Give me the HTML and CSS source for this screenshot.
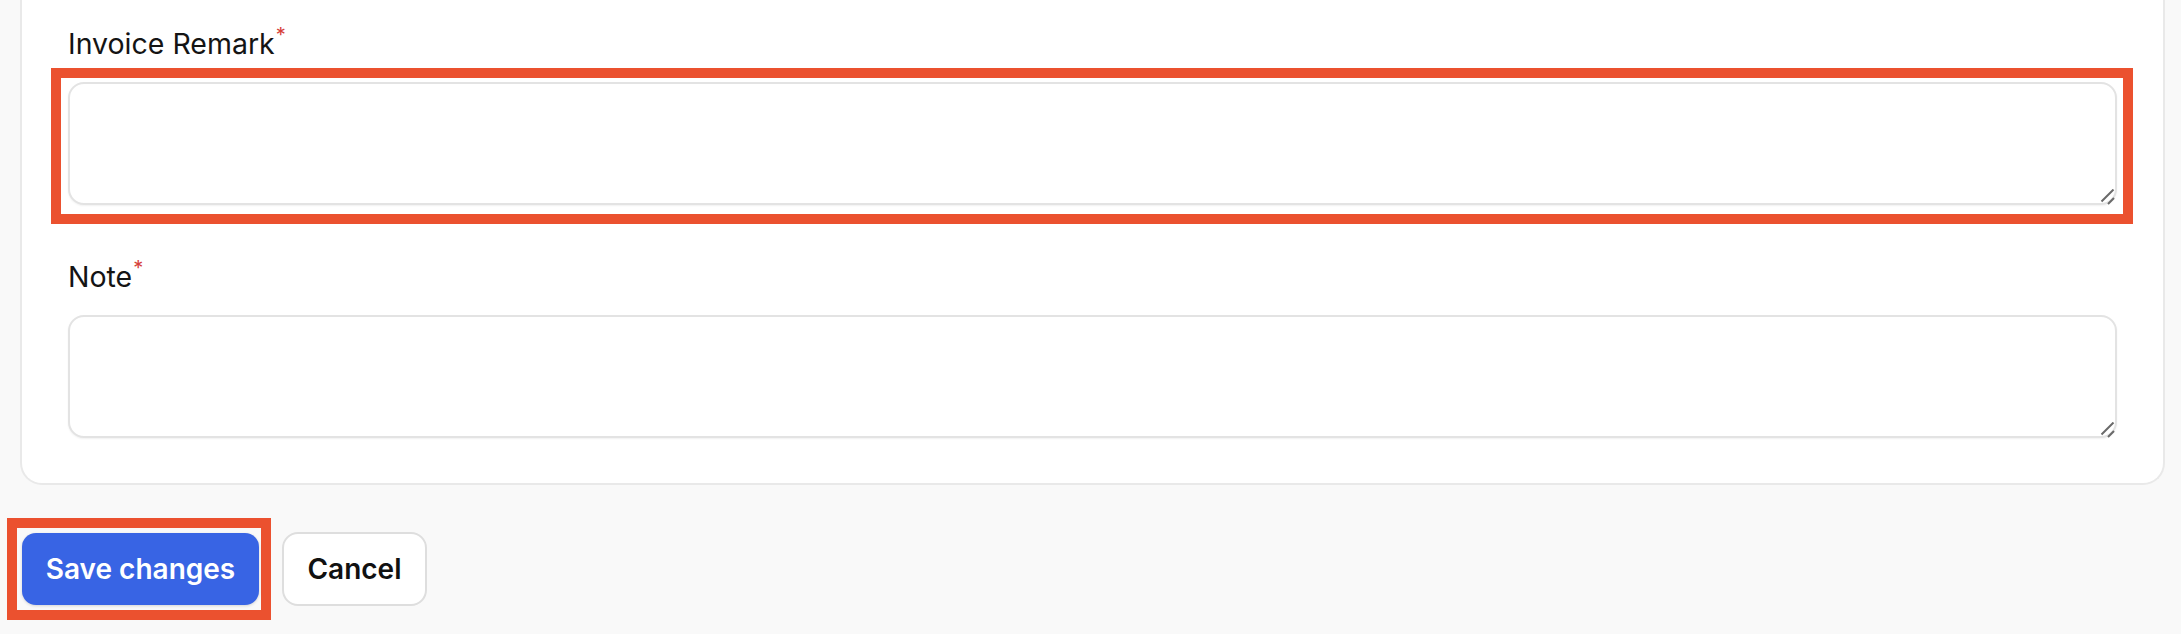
FILE: index.html
```html
<!DOCTYPE html>
<html lang="en">
<head>
<meta charset="utf-8">
<title>Invoice form</title>
<link rel="stylesheet" href="styles.css">
</head>
<body>
<div class="page">
  <section class="card">
    <div class="field">
      <label class="label" for="remark">Invoice Remark<span class="req">*</span></label>
      <div class="frame frame-hl">
        <textarea id="remark" class="input"></textarea>
        <svg class="grip" width="16" height="16" viewBox="0 0 16 16" aria-hidden="true">
          <path d="M1.5 12.5 L13.5 0.5 M8 15 L14 9" stroke="#6a6a6a" stroke-width="2" stroke-linecap="butt" fill="none"/>
        </svg>
      </div>
    </div>
    <div class="field">
      <label class="label" for="note">Note<span class="req">*</span></label>
      <div class="frame">
        <textarea id="note" class="input"></textarea>
        <svg class="grip" width="16" height="16" viewBox="0 0 16 16" aria-hidden="true">
          <path d="M1.5 12.5 L13.5 0.5 M8 15 L14 9" stroke="#6a6a6a" stroke-width="2" stroke-linecap="butt" fill="none"/>
        </svg>
      </div>
    </div>
  </section>
  <div class="actions">
    <div class="btn-hl">
      <button class="btn btn-primary" type="button">Save changes</button>
    </div>
    <button class="btn btn-secondary" type="button">Cancel</button>
  </div>
</div>
</body>
</html>
```
FILE: styles.css
```css
html, body {
  margin: 0;
  padding: 0;
  background: #f9f9f9;
  font-family: Inter, "Noto Sans", "Liberation Sans", sans-serif;
  color: #111111;
}

.page {
  display: flex;
  flex-direction: column;
  height: 634px;
  overflow: hidden;
}

.card {
  margin: 0 16px 0 20px;
  background: #ffffff;
  border: 2px solid #e9e9e9;
  border-top: 0;
  border-radius: 0 0 22px 22px;
  padding: 24px 46px 26px 46px;
  display: flex;
  flex-direction: column;
  gap: 33px;
}

.field {
  display: flex;
  flex-direction: column;
}

.label {
  display: block;
  font-size: 28.5px;
  line-height: 40px;
  font-weight: 400;
  color: #141414;
  margin-bottom: 4px;
}

.req {
  color: #d6403a;
  font-size: 20px;
  line-height: 0;
  position: relative;
  top: -12px;
  margin-left: 1px;
}

.frame {
  position: relative;
  margin: 0 -16px 0 -17px;
  border: 10px solid transparent;
  padding: 4px 6px 9px 7px;
}

.frame-hl {
  border-color: #eb512f;
}

.input {
  display: block;
  width: 100%;
  height: 123px;
  box-sizing: border-box;
  border: 2px solid #e3e3e3;
  border-radius: 16px;
  background: #ffffff;
  box-shadow: 0 1px 2px rgba(0, 0, 0, 0.06);
  font: inherit;
  font-size: 28px;
  margin: 0;
  resize: none;
  outline: none;
}

.grip {
  position: absolute;
  right: 7px;
  bottom: 9px;
  pointer-events: none;
}

.actions {
  display: flex;
  align-items: center;
  gap: 11px;
  margin: 33px 0 0 7px;
}

.btn-hl {
  border: 10px solid #eb512f;
  padding: 5px 2px 5px 5px;
  display: flex;
}

.btn {
  font-family: Inter, "Noto Sans", "Liberation Sans", sans-serif;
  font-size: 28px;
  font-weight: 600;
  display: flex;
  align-items: center;
  justify-content: center;
  box-sizing: border-box;
  cursor: pointer;
  margin: 0;
}

.btn-primary {
  width: 237px;
  height: 72px;
  background: #3864e4;
  color: #ffffff;
  border: 0;
  border-radius: 14px;
  box-shadow: 0 1px 3px rgba(0, 0, 0, 0.15);
}

.btn-secondary {
  width: 145px;
  height: 74px;
  background: #ffffff;
  color: #111111;
  border: 2px solid #dedede;
  border-radius: 16px;
}
```
